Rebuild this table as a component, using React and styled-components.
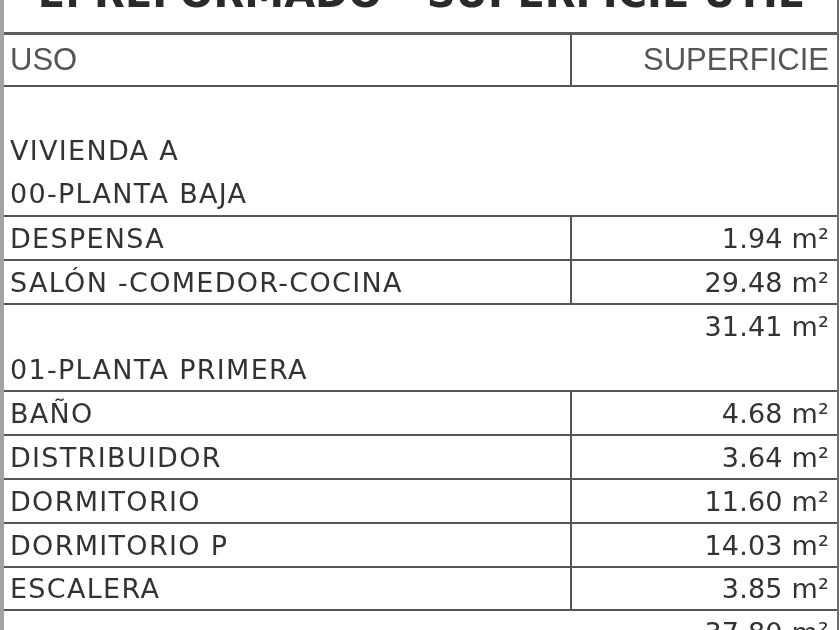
import styled, { createGlobalStyle } from 'styled-components';

const GlobalStyle = createGlobalStyle`
  html, body {
    margin: 0;
    padding: 0;
    background: #ffffff;
    overflow: hidden;
  }
`;

const Sheet = styled.div`
  width: 840px;
  height: 630px;
  overflow: hidden;
  background: #ffffff;
  font-family: "DejaVu Sans", "Liberation Sans", sans-serif;
  color: #333333;
`;

const Table = styled.div`
  width: 833px;
  border-left: 4px solid #a3a3a3;
  border-right: 2px solid #6f6f6f;
  filter: blur(0.35px);
`;

const TitleRow = styled.div`
  height: 32px;
  overflow: hidden;
  border-bottom: 3px solid #5c5c5c;
  display: flex;
  justify-content: center;
`;

const Title = styled.div`
  margin-top: -27px;
  font-size: 40px;
  line-height: 40px;
  font-weight: bold;
  color: #2a2a2a;
  white-space: nowrap;
`;

const Row = styled.div`
  display: grid;
  grid-template-columns: ${(p) => (p.span ? '1fr' : '568px 1fr')};
  height: ${(p) => p.h}px;
  border-bottom: 2px solid #555555;
`;

const Cell = styled.div`
  display: flex;
  align-items: center;
  justify-content: ${(p) => (p.right ? 'flex-end' : 'flex-start')};
  padding: 0 ${(p) => (p.right ? '8px' : '0')} 0 ${(p) => (p.right ? '0' : '6px')};
  font-family: ${(p) => (p.head ? '"Liberation Sans", Arial, sans-serif' : 'inherit')};
  font-size: ${(p) => (p.head ? '31px' : '27px')};
  letter-spacing: ${(p) => (p.head ? '0' : p.right ? '0.2px' : '1.3px')};
  color: ${(p) => (p.head ? '#555555' : '#333333')};
  white-space: nowrap;
  border-right: ${(p) => (p.divider ? '2px solid #555555' : 'none')};
`;

const Stack = styled.div`
  display: flex;
  flex-direction: column;
  justify-content: ${(p) => (p.top ? 'flex-start' : 'flex-end')};
`;

const Line = styled.div`
  height: 43px;
  line-height: 43px;
  font-size: 27px;
  letter-spacing: ${(p) => (p.right ? '0.2px' : '1.3px')};
  text-align: ${(p) => (p.right ? 'right' : 'left')};
  padding: 0 ${(p) => (p.right ? '8px' : '0')} 0 ${(p) => (p.right ? '0' : '6px')};
  white-space: nowrap;
`;

const rowsA = [
  ['DESPENSA', '1.94'],
  ['SALÓN -COMEDOR-COCINA', '29.48'],
];

const rowsB = [
  ['BAÑO', '4.68'],
  ['DISTRIBUIDOR', '3.64'],
  ['DORMITORIO', '11.60'],
  ['DORMITORIO P', '14.03'],
  ['ESCALERA', '3.85'],
];

const DataRow = ({ name, area, h = 42 }) => (
  <Row h={h}>
    <Cell divider>{name}</Cell>
    <Cell right>{area} m²</Cell>
  </Row>
);

export default function App() {
  return (
    <Sheet>
      <GlobalStyle />
      <Table>
        <TitleRow>
          <Title>E. REFORMADO - SUPERFICIE ÚTIL</Title>
        </TitleRow>
        <Row h={50}>
          <Cell head divider>USO</Cell>
          <Cell head right>SUPERFICIE</Cell>
        </Row>
        <Row span h={128}>
          <Stack>
            <Line>VIVIENDA A</Line>
            <Line>00-PLANTA BAJA</Line>
          </Stack>
        </Row>
        {rowsA.map(([n, a]) => (
          <DataRow key={n} name={n} area={a} />
        ))}
        <Row span h={85}>
          <Stack>
            <Line right>31.41 m²</Line>
            <Line>01-PLANTA PRIMERA</Line>
          </Stack>
        </Row>
        {rowsB.map(([n, a], i) => (
          <DataRow key={n} name={n} area={a} h={i === rowsB.length - 1 ? 41 : 42} />
        ))}
        <Row span h={60}>
          <Stack top>
            <Line right>37.80 m²</Line>
          </Stack>
        </Row>
      </Table>
    </Sheet>
  );
}
